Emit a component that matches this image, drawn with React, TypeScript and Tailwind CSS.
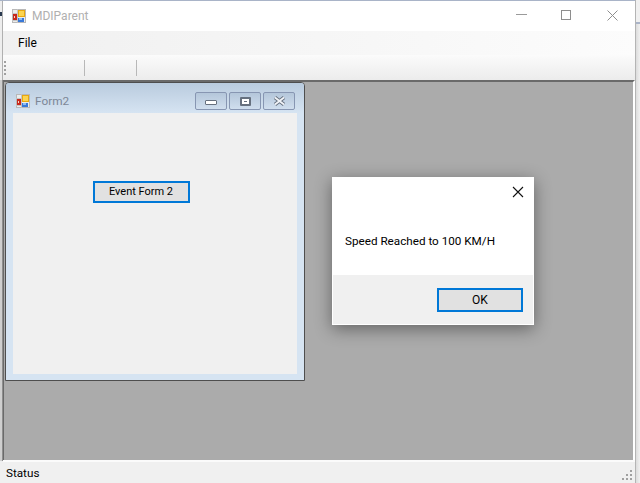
import React from "react";

const font = { fontFamily: 'Roboto, "Noto Sans", sans-serif' };

function AppIcon({ size = 14 }: { size?: number }) {
  return (
    <svg width={size} height={size} viewBox="0 0 14 14" className="shrink-0" shapeRendering="crispEdges">
      <rect x="0" y="0" width="14" height="14" fill="#b8b8b8" />
      <rect x="1" y="1" width="12" height="12" fill="#ececec" />
      <rect x="5" y="0" width="1" height="14" fill="#c4c4c4" />
      <rect x="0" y="4" width="5" height="1" fill="#c4c4c4" />
      <rect x="0" y="11" width="6" height="1" fill="#c4c4c4" />
      <rect x="1" y="5" width="4" height="6" fill="#c8281c" />
      <rect x="2" y="7" width="1" height="2" fill="#f4d8c8" />
      <rect x="6" y="1" width="7" height="7" fill="#e8a810" />
      <rect x="7" y="2" width="5" height="5" fill="#fcd450" />
      <rect x="6" y="9" width="6" height="4" fill="#3878d8" />
      <rect x="7" y="9" width="3" height="2" fill="#8cbcf0" />
    </svg>
  );
}

function ChildButton({ children }: { children: React.ReactNode }) {
  return (
    <div className="flex h-[18px] w-[32px] items-center justify-center rounded-[2px] border border-[#8796b2] bg-gradient-to-b from-[#b4c6da] to-[#d0deee]">
      {children}
    </div>
  );
}

export default function App() {
  return (
    <div className="flex h-[483px] w-[640px] overflow-hidden bg-[#f0f0f0] text-[12px] text-black" style={font}>
      <div className="flex w-[3px] shrink-0 flex-col">
        <div className="h-px bg-[#a9b4c8]" />
        <div className="flex h-[79px] flex-col border-r border-[#b0b0b0] bg-[#eeeeee] pt-[11px]">
          <div className="h-[4px] w-[2px] bg-[#2a3a50]" />
        </div>
        <div className="flex-1 border-r border-[#8e8e8e] bg-[#cfcfcf]" />
        <div className="h-[22px] bg-[#f0f0f0]" />
      </div>
      <div className="flex w-[632px] shrink-0 flex-col">
        <div className="flex h-[31px] items-center justify-between border-t border-[#a9b4c8] bg-white pl-[9px]">
          <div className="flex items-center gap-[6px]">
            <AppIcon />
            <span className="text-[12px] text-[#b0b0b0]">MDIParent</span>
          </div>
          <div className="mb-[2px] flex items-center">
            <svg width="11" height="2" viewBox="0 0 11 2" className="mr-[34px]">
              <rect width="11" height="1" fill="#9a9a9a" />
            </svg>
            <svg width="10" height="10" viewBox="0 0 10 10" className="mr-[36px]">
              <rect x="0.5" y="0.5" width="9" height="9" fill="none" stroke="#8e8e8e" />
            </svg>
            <svg width="11" height="11" viewBox="0 0 11 11" className="mr-[17px]">
              <path d="M0.5 0.5L10.5 10.5M10.5 0.5L0.5 10.5" stroke="#8e8e8e" fill="none" />
            </svg>
          </div>
        </div>
        <div className="flex h-[24px] items-center bg-gradient-to-r from-[#f0f0f0] to-[#fcfcfc] pl-[15px]">
          <span className="text-[12px]">File</span>
        </div>
        <div className="flex h-[25px] items-center bg-gradient-to-b from-[#fbfbfb] to-[#ececec]">
          <div className="ml-[1px] flex flex-col gap-[2px]">
            <div className="h-[2px] w-[2px] bg-[#a0a0a0]" />
            <div className="h-[2px] w-[2px] bg-[#a0a0a0]" />
            <div className="h-[2px] w-[2px] bg-[#a0a0a0]" />
            <div className="h-[2px] w-[2px] bg-[#a0a0a0]" />
          </div>
          <div className="ml-[78px] h-[16px] w-[1px] bg-[#b8b8b8]" />
          <div className="ml-[51px] h-[16px] w-[1px] bg-[#b8b8b8]" />
        </div>
        <div className="relative flex-1 border-t-2 border-r-2 border-l border-t-[#6a6a6a] border-r-white border-l-[#6a6a6a] bg-[#ababab]">
          <div className="absolute top-0 left-[1px] flex h-[299px] w-[300px] flex-col rounded-t-[4px] border border-[#4e4e4e] bg-[#d6e4f2] px-[7px] pb-[6px]">
            <div className="-mx-[7px] flex h-[30px] shrink-0 items-center justify-between rounded-t-[3px] bg-gradient-to-b from-[#b9cbde] to-[#d6e4f2] pt-[6px] pr-[9px] pl-[10px]">
              <div className="flex items-center gap-[5px]">
                <AppIcon />
                <span className="mt-[1px] text-[11.8px] text-[#7d8796]">Form2</span>
              </div>
              <div className="flex gap-[2px]">
                <ChildButton>
                  <div className="mt-[3px] h-[5px] w-[12px] rounded-[1px] border border-[#66707e] bg-white" />
                </ChildButton>
                <ChildButton>
                  <div className="flex h-[9px] w-[11px] items-center justify-center rounded-[1px] border-2 border-[#66707e] bg-white">
                    <div className="h-[1px] w-[3px] bg-[#66707e]" />
                  </div>
                </ChildButton>
                <ChildButton>
                  <svg width="13" height="10" viewBox="0 0 13 10">
                    <path d="M2 1.5L11 8.5M11 1.5L2 8.5" stroke="#66707e" strokeWidth="3.6" fill="none" />
                    <path d="M2 1.5L11 8.5M11 1.5L2 8.5" stroke="#f2f4f8" strokeWidth="1.8" fill="none" />
                  </svg>
                </ChildButton>
              </div>
            </div>
            <div className="flex flex-1 flex-col items-center bg-[#f0f0f0] pt-[68px]">
              <div className="mr-[28px] flex h-[22px] w-[97px] items-center justify-center border-2 border-[#0078d7] bg-[#e1e1e1] text-[11px]">
                Event Form 2
              </div>
            </div>
          </div>
          <div className="absolute top-[95px] left-[328px] flex h-[148px] w-[202px] flex-col bg-white shadow-[0_4px_16px_rgba(0,0,0,0.42)]">
            <div className="flex h-[98px] flex-col">
              <div className="flex justify-end pt-[9px] pr-[10px]">
                <svg width="12" height="12" viewBox="0 0 12 12">
                  <path d="M1 1L11 11M11 1L1 11" stroke="#111" strokeWidth="1.1" fill="none" />
                </svg>
              </div>
              <div className="mt-[35px] pl-[13px] text-[11.7px]">Speed Reached to 100 KM/H</div>
            </div>
            <div className="mr-[1px] mb-[1px] ml-[1px] flex flex-1 justify-end bg-[#f0f0f0] pt-[13px] pr-[10px]">
              <div className="flex h-[24px] w-[86px] items-center justify-center border-2 border-[#0078d7] bg-[#e1e1e1] text-[12px]">
                OK
              </div>
            </div>
          </div>
        </div>
        <div className="flex h-[23px] items-center justify-between border-t-2 border-[#fbfbfb] bg-[#f0f0f0] pt-[3px] pl-[3px]">
          <span className="text-[11.7px]">Status</span>
          <svg width="12" height="12" viewBox="0 0 12 12" className="mt-[3px] mr-[1px]" shapeRendering="crispEdges">
            <g fill="#a0a0a0">
              <rect x="8" y="0" width="2" height="2" />
              <rect x="4" y="4" width="2" height="2" />
              <rect x="8" y="4" width="2" height="2" />
              <rect x="0" y="8" width="2" height="2" />
              <rect x="4" y="8" width="2" height="2" />
              <rect x="8" y="8" width="2" height="2" />
            </g>
          </svg>
        </div>
      </div>
      <div className="flex flex-1 flex-col border-l border-[#b4b4b4]">
        <div className="h-[22px] bg-[#f0f0f0]" />
        <div className="h-[2px] bg-[#aab4c8]" />
        <div className="flex-1 bg-gradient-to-r from-[#dcdcdc] to-[#f0f0f0]" />
      </div>
    </div>
  );
}
